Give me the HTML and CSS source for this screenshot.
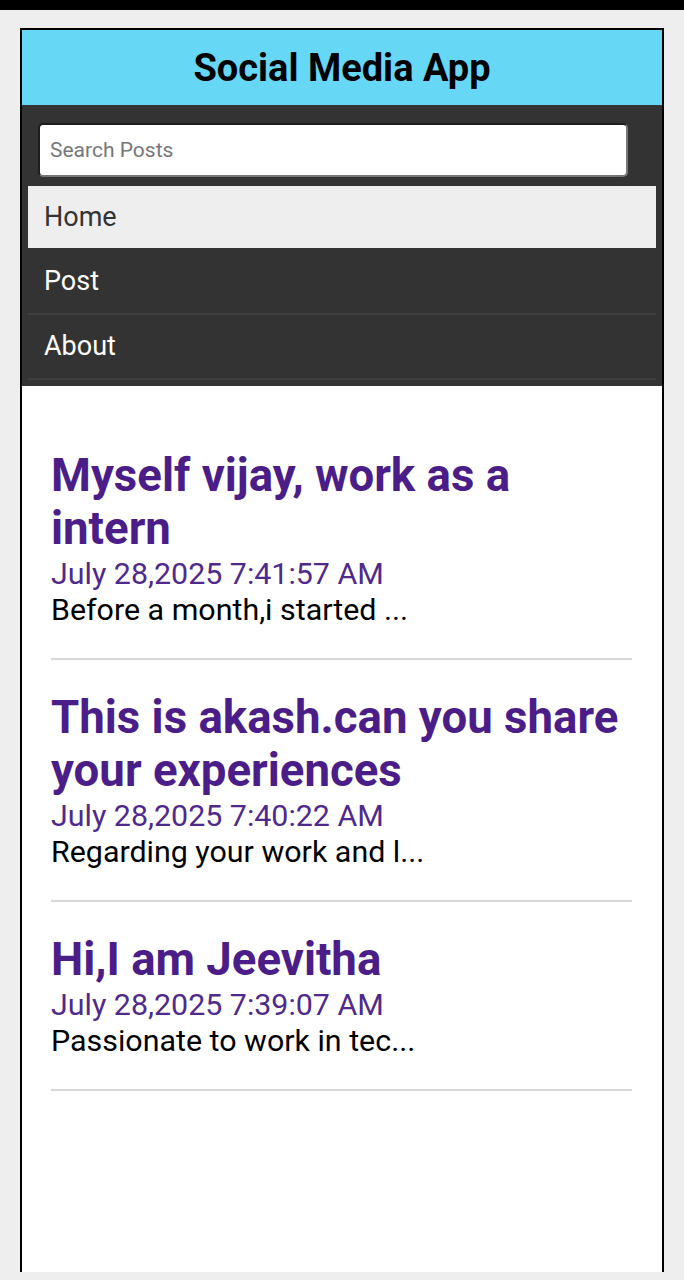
FILE: index.html
```html
<!DOCTYPE html>
<html lang="en">
<head>
<meta charset="utf-8">
<title>Social Media App</title>
<link rel="stylesheet" href="styles.css">
</head>
<body>
<div class="status-bar"></div>
<div class="page">
  <div class="app">
    <header class="app-header">
      <h1>Social Media App</h1>
    </header>
    <nav class="nav">
      <div class="search">
        <input type="text" placeholder="Search Posts">
      </div>
      <a class="nav-item active" href="#">Home</a>
      <a class="nav-item" href="#">Post</a>
      <a class="nav-item" href="#">About</a>
    </nav>
    <main class="content">
      <article class="post">
        <h2 class="post-title">Myself vijay, work as a intern</h2>
        <div class="post-date">July 28,2025 7:41:57 AM</div>
        <p class="post-excerpt">Before a month,i started ...</p>
      </article>
      <article class="post">
        <h2 class="post-title">This is akash.can you share your experiences</h2>
        <div class="post-date">July 28,2025 7:40:22 AM</div>
        <p class="post-excerpt">Regarding your work and l...</p>
      </article>
      <article class="post">
        <h2 class="post-title">Hi,I am Jeevitha</h2>
        <div class="post-date">July 28,2025 7:39:07 AM</div>
        <p class="post-excerpt">Passionate to work in tec...</p>
      </article>
    </main>
  </div>
</div>
</body>
</html>
```

FILE: styles.css
```css
* { box-sizing: border-box; }

html, body {
  margin: 0;
  padding: 0;
  height: 1280px;
  overflow: hidden;
}

body {
  background: #eeeeee;
  font-family: Roboto, "Noto Sans", sans-serif;
}

.status-bar {
  height: 10px;
  background: #000;
}

.page {
  padding: 18px 20px 0 20px;
}

.app {
  height: 1244px;
  background: #fff;
  border: 2px solid #000;
  border-bottom: 0;
  display: flex;
  flex-direction: column;
}

.app-header {
  background: #66d7f5;
  height: 75px;
  display: flex;
  align-items: center;
  justify-content: center;
  padding-top: 1px;
}

.app-header h1 {
  margin: 0;
  font-size: 38px;
  font-weight: 700;
  color: #000;
}

.nav {
  background: #333333;
  padding: 8px 6px 6px 6px;
  display: flex;
  flex-direction: column;
}

.search {
  padding: 10px 10px 9px 10px;
}

.search input {
  display: block;
  width: 590px;
  height: 54px;
  border-radius: 5px;
  border: 2px solid;
  border-color: #1e1e1e #777 #777 #1e1e1e;
  background: #fff;
  padding: 0 10px;
  font-family: Roboto, sans-serif;
  font-size: 21px;
  color: #333;
  outline: none;
}

.search input::placeholder {
  color: #777;
}

.nav-item {
  display: flex;
  align-items: center;
  height: 65px;
  padding: 0 16px 1px 16px;
  font-size: 27px;
  color: #fff;
  text-decoration: none;
  border-bottom: 2px solid #3f3f3f;
}

.nav-item.active {
  height: 64px;
  background: #eeeeee;
  color: #333;
  border-bottom-color: #333333;
}

.content {
  padding: 32px 30px 0 29px;
}

.post {
  margin-top: 31px;
  padding-bottom: 30px;
  border-bottom: 2px solid #d8d8d8;
}

.post-title {
  margin: 0;
  font-size: 45.6px;
  line-height: 53px;
  font-weight: 700;
  color: #4b1d88;
}

.post-date {
  margin-top: 1px;
  font-size: 30.4px;
  line-height: 36px;
  color: #4f2a8c;
}

.post-excerpt {
  margin: 0;
  font-size: 30.4px;
  line-height: 36px;
  color: #000;
}
```
